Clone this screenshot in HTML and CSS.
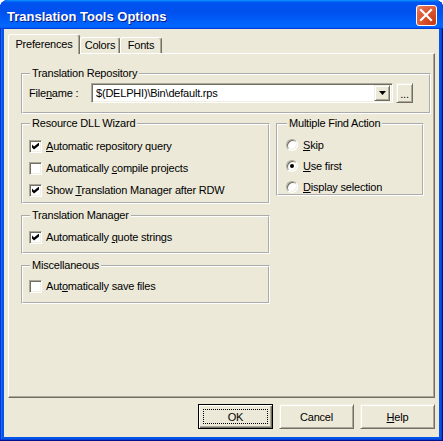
FILE: index.html
```html
<!DOCTYPE html>
<html lang="en">
<head>
    <meta charset="UTF-8">
    <title>Translation Tools Options</title>
    <link rel="stylesheet" href="styles.css">
</head>
<body>
    <div class="window">
        <!-- Title bar -->
        <div class="titlebar">
            <span class="title">Translation Tools Options</span>
            <span class="close">
                <svg width="19" height="19" viewBox="0 0 19 19"><path d="M4 4 L14 14 M14 4 L4 14" stroke="#fff" stroke-width="2.2" stroke-linecap="square"/></svg>
            </span>
        </div>

        <div class="client">
            <!-- Tabs -->
            <div class="tabs">
                <div class="tab active" style="width: 72px">Preferences</div>
                <div class="tab" style="width: 40px">Colors</div>
                <div class="tab" style="width: 42px">Fonts</div>
            </div>

            <div class="panel">
                <fieldset class="group repo">
                    <legend>Translation Repository</legend>
                    <div class="file-row">
                        <label class="file-label">File<u>n</u>ame :</label>
                        <div class="combo">
                            <span class="combo-text">$(DELPHI)\Bin\default.rps</span>
                            <span class="combo-btn raised">
                                <svg width="7" height="4" viewBox="0 0 7 4"><path d="M0 0 H7 L3.5 4 Z" fill="#000"/></svg>
                            </span>
                        </div>
                        <span class="dots-btn raised">...</span>
                    </div>
                </fieldset>

                <div class="columns">
                    <div class="col-left">
                        <fieldset class="group dll">
                            <legend>Resource DLL Wizard</legend>
                            <div class="check"><span class="box on"></span><span><u>A</u>utomatic repository query</span></div>
                            <div class="check"><span class="box"></span><span>Automatically <u>c</u>ompile projects</span></div>
                            <div class="check"><span class="box on"></span><span>Show <u>T</u>ranslation Manager after RDW</span></div>
                        </fieldset>
                        <fieldset class="group tm">
                            <legend>Translation Manager</legend>
                            <div class="check"><span class="box on"></span><span>Automatically <u>q</u>uote strings</span></div>
                        </fieldset>
                        <fieldset class="group misc">
                            <legend>Miscellaneous</legend>
                            <div class="check"><span class="box"></span><span>Aut<u>o</u>matically save files</span></div>
                        </fieldset>
                    </div>

                    <fieldset class="group find">
                        <legend>Multiple Find Action</legend>
                        <div class="radio-row"><span class="radio"></span><span><u>S</u>kip</span></div>
                        <div class="radio-row"><span class="radio on"></span><span><u>U</u>se first</span></div>
                        <div class="radio-row"><span class="radio"></span><span><u>D</u>isplay selection</span></div>
                    </fieldset>
                </div>
            </div>

            <!-- Dialog buttons -->
            <div class="buttons">
                <div class="btn default"><span class="focus">OK</span></div>
                <div class="btn">Cancel</div>
                <div class="btn"><span><u>H</u>elp</span></div>
            </div>
        </div>
    </div>
</body>
</html>
```

FILE: styles.css
```css
* { box-sizing: border-box; }

body {
    margin: 0;
    background: #fff;
    font-family: "Liberation Sans", Arial, sans-serif;
    font-size: 11px;
    letter-spacing: -0.2px;
    color: #000;
}

/* Window frame */
.window {
    width: 443px;
    height: 441px;
    display: flex;
    flex-direction: column;
    background: #0055ea;
    border-radius: 8px 8px 0 0;
    overflow: hidden;
    box-shadow: inset -1px -1px #00138c, inset 1px 1px #0831d9, inset -2px -2px #0a3fd0, inset 2px 2px #166aee;
}

.titlebar {
    height: 29px;
    flex: none;
    display: flex;
    align-items: center;
    justify-content: space-between;
    padding: 2px 6px 0 7px;
    background: linear-gradient(180deg, #0997ff, #0053ee 8%, #0050ee 40%, #06f 88%, #06f 93%, #005bff 95%, #003dd7 96%, #003dd7);
}
.title {
    margin-top: 1px;
    color: #fff;
    font: bold 13px "Liberation Sans", sans-serif;
    letter-spacing: 0;
    text-shadow: 1px 1px #0a1883;
}
.close {
    width: 21px;
    height: 21px;
    display: flex;
    border: 1px solid #fff;
    border-radius: 3px;
    background: radial-gradient(circle at 85% 85%, #c73c12 0, #db5530 50%, #e46a48 80%, #f0997a 100%);
}

.client {
    flex: 1;
    margin: 0 4px 4px;
    padding: 5px 4px 0;
    background: #ece9d8;
    display: flex;
    flex-direction: column;
}

/* Tabs */
.tabs {
    display: flex;
    align-items: flex-end;
    height: 20px;
    margin-bottom: -1px;
    position: relative;
    z-index: 1;
}
.tab {
    height: 16px;
    margin-bottom: 1px;
    border: 1px solid #fff;
    border-bottom: 0;
    border-right-color: #716f64;
    border-radius: 3px 3px 0 0;
    box-shadow: inset -1px 0 #aca899;
    background: #ece9d8;
    text-align: center;
    line-height: 14px;
}
.tab.active {
    height: 20px;
    margin-bottom: 0;
    padding-top: 2px;
}

.panel {
    width: 427px;
    height: 345px;
    border: 1px solid;
    border-color: #fff #716f64 #716f64 #fff;
    box-shadow: inset -1px -1px #aca899;
    padding: 12px 0 0 12px;
}

/* Group boxes: etched frame */
.group {
    margin: 0;
    border: 2px groove #fff;
    padding: 0 0 0 6px;
}
.group legend {
    padding: 0 2px 2px;
    margin-left: 1px;
    line-height: 14px;
}

.repo { width: 410px; height: 48px; padding-top: 1px; }
.file-row { display: flex; align-items: center; height: 20px; }
.file-label { width: 62px; }

.combo {
    width: 302px;
    height: 20px;
    display: flex;
    align-items: center;
    padding: 0 2px 0 4px;
    background: #fff;
    border: 1px solid;
    border-color: #aca899 #fff #fff #aca899;
    box-shadow: inset 1px 1px #716f64, inset -1px -1px #f1efe2;
}
.combo-text { flex: 1; }

.raised {
    display: flex;
    align-items: center;
    justify-content: center;
    background: #ece9d8;
    border: 1px solid;
    border-color: #f1efe2 #716f64 #716f64 #f1efe2;
    box-shadow: inset 1px 1px #fff, inset -1px -1px #aca899;
}
.combo-btn { width: 16px; height: 16px; }
.dots-btn { width: 17px; height: 20px; margin-left: 3px; padding-top: 2px; }

.columns {
    display: grid;
    grid-template-columns: 249px 148px;
    column-gap: 6px;
    align-items: start;
    margin-top: 2px;
}
.col-left { display: flex; flex-direction: column; gap: 4px; }

.dll { height: 88px; padding-top: 3px; }
.tm { height: 46px; padding-top: 2px; }
.misc { height: 46px; padding-top: 1px; }
.find { height: 80px; padding: 2px 0 0 8px; }

.check { display: flex; align-items: center; gap: 4px; height: 22px; }
.box {
    width: 13px;
    height: 13px;
    flex: none;
    display: flex;
    align-items: center;
    justify-content: center;
    background: #fff;
    border: 1px solid;
    border-color: #aca899 #fff #fff #aca899;
    box-shadow: inset 1px 1px #716f64, inset -1px -1px #f1efe2;
}
.box.on::after {
    content: "";
    width: 7px;
    height: 7px;
    background: #000;
    clip-path: polygon(0 28.6%, 28.6% 57.1%, 100% 0, 100% 42.9%, 28.6% 100%, 0 71.4%);
}

.radio-row { display: flex; align-items: center; gap: 5px; height: 21px; }
.radio {
    width: 12px;
    height: 12px;
    flex: none;
    display: flex;
    align-items: center;
    justify-content: center;
    border-radius: 50%;
    background: #fff;
    border: 1px solid;
    border-color: #aca899 #fff #fff #aca899;
    box-shadow: inset 1px 1px #716f64, inset -1px -1px #f1efe2;
}
.radio.on::after {
    content: "";
    width: 4px;
    height: 4px;
    border-radius: 50%;
    background: #000;
}

/* Dialog buttons */
.buttons {
    display: flex;
    justify-content: flex-end;
    gap: 6px;
    margin-top: 6px;
}
.btn {
    width: 75px;
    height: 25px;
    display: flex;
    align-items: center;
    justify-content: center;
    border: 1px solid;
    border-color: #f1efe2 #716f64 #716f64 #f1efe2;
    box-shadow: inset 1px 1px #fff, inset -1px -1px #aca899;
}
.btn.default {
    border-color: #000;
    padding: 4px;
    box-shadow: inset 1px 1px #fff, inset -1px -1px #716f64, inset -2px -2px #aca899;
}
.btn .focus {
    flex: 1;
    align-self: stretch;
    display: flex;
    align-items: center;
    justify-content: center;
    border: 1px dotted #000;
}
```
